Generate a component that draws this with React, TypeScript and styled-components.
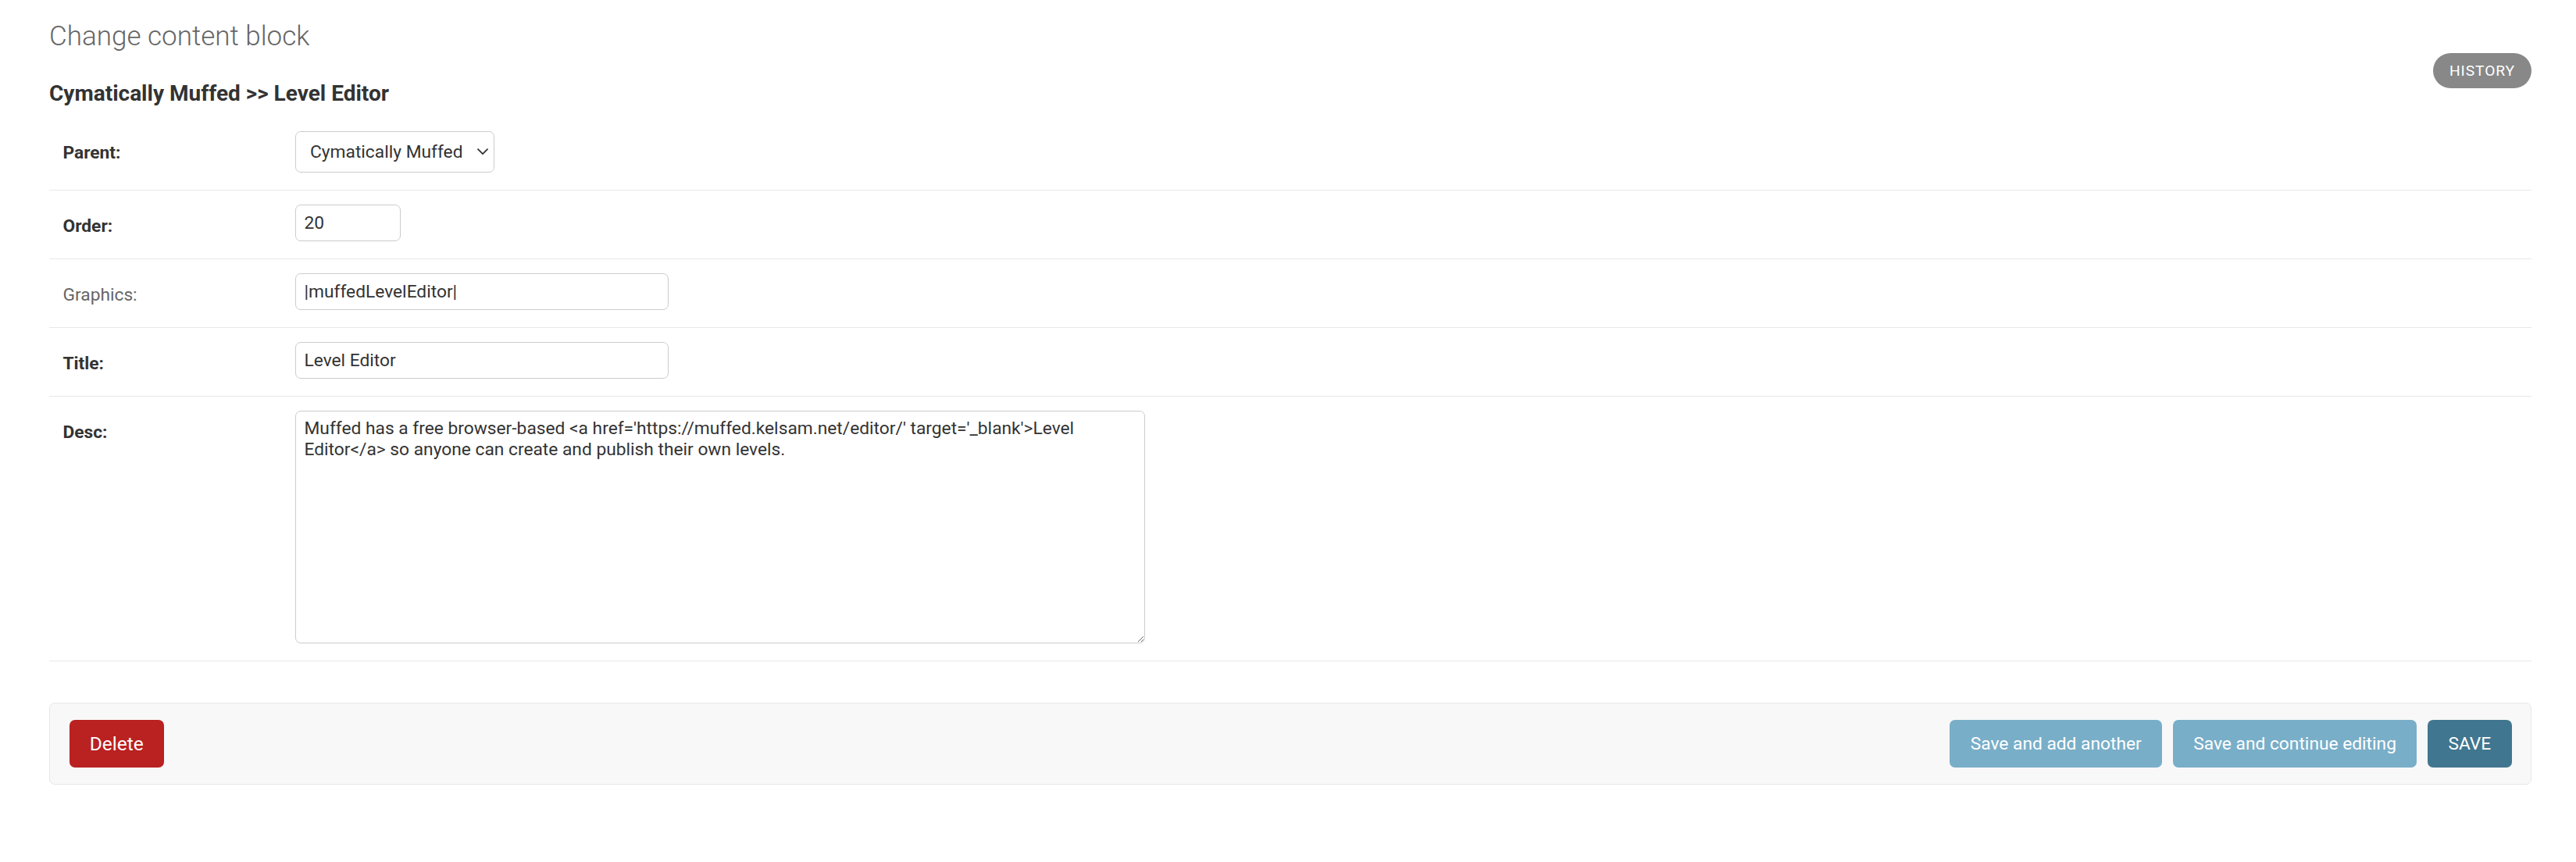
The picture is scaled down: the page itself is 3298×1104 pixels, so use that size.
import styled, { createGlobalStyle } from 'styled-components'

const GlobalStyle = createGlobalStyle`
  html, body {
    margin: 0;
    padding: 0;
    background: #fff;
  }
  body {
    font-family: Roboto, 'Liberation Sans', Arial, sans-serif;
    color: #333;
  }
`

const Page = styled.div`
  padding: 26px 57px 40px 63px;
`

const Header = styled.div`
  display: flex;
  justify-content: space-between;
  align-items: flex-start;
`

const Title = styled.h1`
  margin: 0 0 36px;
  font-size: 35px;
  font-weight: 300;
  line-height: normal;
  color: #666;
`

const Subtitle = styled.h2`
  margin: 0 0 14.5px;
  font-size: 28px;
  font-weight: 700;
  line-height: normal;
  color: #333;
`

const ObjectTools = styled.div`
  margin-top: 42px;
`

const HistoryLink = styled.a`
  display: flex;
  align-items: center;
  justify-content: center;
  width: 126px;
  height: 45px;
  box-sizing: border-box;
  border-radius: 22.5px;
  background: #888;
  color: #fff;
  font-size: 19.25px;
  letter-spacing: 0.875px;
  text-transform: uppercase;
  text-decoration: none;
`

const Fieldset = styled.fieldset`
  margin: 0;
  padding: 0;
  border: none;
  min-width: 0;
`

const FormRow = styled.div`
  display: flex;
  align-items: flex-start;
  padding: 17.5px 17.5px 22.5px;
  border-bottom: 1px solid #e8e8e8;
`

const Label = styled.label<{ $required?: boolean }>`
  flex-shrink: 0;
  width: 280px;
  padding: 14px 17.5px 0 0;
  font-size: 22.75px;
  line-height: normal;
  font-weight: ${p => (p.$required ? 700 : 400)};
  color: ${p => (p.$required ? '#333' : '#666')};
`

const TextInput = styled.input<{ $width: number }>`
  box-sizing: border-box;
  width: ${p => p.$width}px;
  height: 47px;
  margin: 0;
  padding: 0 10.5px;
  border: 1px solid #ccc;
  border-radius: 7px;
  font-family: inherit;
  font-size: 22.75px;
  color: #333;
  background: #fff;
  outline: none;
`

const SelectBox = styled.div`
  box-sizing: border-box;
  display: flex;
  align-items: center;
  justify-content: space-between;
  width: 255px;
  height: 52.5px;
  padding: 0 7px 0 18px;
  border: 1px solid #ccc;
  border-radius: 7px;
  font-size: 22.75px;
  color: #333;
  background: #fff;
`

const TextArea = styled.textarea`
  box-sizing: border-box;
  width: 1088px;
  height: 298px;
  margin: 0;
  padding: 8.75px 10.5px;
  border: 1px solid #ccc;
  border-radius: 7px;
  font-family: inherit;
  font-size: 22.75px;
  line-height: normal;
  color: #333;
  background: #fff;
  outline: none;
  resize: both;
`

const SubmitRow = styled.div`
  display: flex;
  align-items: center;
  gap: 14px;
  margin-top: 53px;
  padding: 21px 24.5px;
  background: #f8f8f8;
  border: 1px solid #e8e8e8;
  border-radius: 7px;
`

const DeleteLink = styled.a`
  display: flex;
  align-items: center;
  height: 61px;
  box-sizing: border-box;
  margin-right: auto;
  padding: 0 26.25px;
  border-radius: 7px;
  background: #ba2121;
  color: #fff;
  font-size: 24.5px;
  text-decoration: none;
`

const Button = styled.button<{ $primary?: boolean }>`
  height: 61px;
  padding: 0 26.25px;
  border: none;
  border-radius: 7px;
  background: ${p => (p.$primary ? '#417690' : '#79aec8')};
  color: #fff;
  font-family: inherit;
  font-size: 22.75px;
  cursor: pointer;
`

const Chevron = () => (
  <svg width="14" height="9" viewBox="0 0 14 9" fill="none">
    <path d="M1 1.2l6 6 6-6" stroke="#333" strokeWidth="1.8" strokeLinecap="round" strokeLinejoin="round" />
  </svg>
)

const desc =
  "Muffed has a free browser-based <a href='https://muffed.kelsam.net/editor/' target='_blank'>Level Editor</a> so anyone can create and publish their own levels."

export default function App() {
  return (
    <>
      <GlobalStyle />
      <Page>
        <Header>
          <div>
            <Title>Change content block</Title>
            <Subtitle>Cymatically Muffed &gt;&gt; Level Editor</Subtitle>
          </div>
          <ObjectTools>
            <HistoryLink href="#">History</HistoryLink>
          </ObjectTools>
        </Header>

        <Fieldset>
          <FormRow>
            <Label $required>Parent:</Label>
            <SelectBox>
              <span>Cymatically Muffed</span>
              <Chevron />
            </SelectBox>
          </FormRow>
          <FormRow>
            <Label $required>Order:</Label>
            <TextInput $width={135} defaultValue="20" />
          </FormRow>
          <FormRow>
            <Label>Graphics:</Label>
            <TextInput $width={478} defaultValue="|muffedLevelEditor|" />
          </FormRow>
          <FormRow>
            <Label $required>Title:</Label>
            <TextInput $width={478} defaultValue="Level Editor" />
          </FormRow>
          <FormRow>
            <Label $required>Desc:</Label>
            <TextArea defaultValue={desc} />
          </FormRow>
        </Fieldset>

        <SubmitRow>
          <DeleteLink href="#">Delete</DeleteLink>
          <Button>Save and add another</Button>
          <Button>Save and continue editing</Button>
          <Button $primary>SAVE</Button>
        </SubmitRow>
      </Page>
    </>
  )
}
